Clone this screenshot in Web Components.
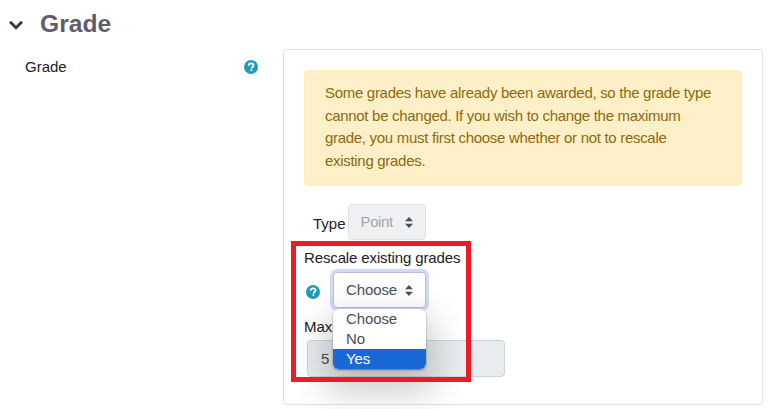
<!DOCTYPE html>
<html>
<head>
<meta charset="utf-8">
<title>Grade</title>
<style>
html, body { margin: 0; height: 409px; overflow: hidden; background: #fff; }
body { font: 15px/20px "Liberation Sans", Arial, sans-serif; color: #1d2125; }
</style>
</head>
<body>
<grade-page></grade-page>

<script>
class HelpIcon extends HTMLElement {
  constructor () {
    super()
    this.attachShadow({ mode: 'open' }).innerHTML = `
<style>
:host { display: block; width: 14px; height: 14px; }
svg { display: block; }
</style>
<svg width="14" height="14" viewBox="0 0 14 14">
  <circle cx="7" cy="7" r="7" fill="#1f9bb8"/>
  <path d="M4.6 5.6C4.7 4.2 5.7 3.3 7.1 3.3c1.4 0 2.4.9 2.4 2 0 1-.6 1.5-1.2 1.9-.5.3-.7.5-.7 1v.2" fill="none" stroke="#fff" stroke-width="1.7"/>
  <rect x="6.5" y="9.3" width="1.8" height="1.8" fill="#fff"/>
</svg>`
  }
}
customElements.define('help-icon', HelpIcon)

class SectionHeader extends HTMLElement {
  constructor () {
    super()
    this.attachShadow({ mode: 'open' }).innerHTML = `
<style>
:host { display: flex; align-items: center; height: 49px; padding: 0 0 1px 9px; box-sizing: border-box; }
svg { display: block; margin-right: 17px; margin-top: 1px; }
h3 { margin: 0; font: bold 24.6px/28px "Liberation Sans", Arial, sans-serif; color: #5e5d6c; }
</style>
<svg width="14" height="10" viewBox="0 0 14 10">
  <path d="M1 1.8 7 7.8 13 1.8" fill="none" stroke="#343a40" stroke-width="2.9"/>
</svg>
<h3><slot></slot></h3>`
  }
}
customElements.define('section-header', SectionHeader)

class AlertBox extends HTMLElement {
  constructor () {
    super()
    this.attachShadow({ mode: 'open' }).innerHTML = `
<style>
:host {
  display: block; box-sizing: border-box; height: 116px; padding: 11px 26px 11px 20px;
  background: #fdf0c8; border: 1px solid #fdeeba; border-radius: 4px;
  color: #8f6a0c; line-height: 22.5px; letter-spacing: -0.3px;
}
</style>
<slot></slot>`
  }
}
customElements.define('alert-box', AlertBox)

class SelectBox extends HTMLElement {
  static get observedAttributes () { return ['value'] }

  constructor () {
    super()
    this.attachShadow({ mode: 'open' }).innerHTML = `
<style>
:host {
  display: flex; align-items: center; justify-content: space-between; box-sizing: border-box;
  height: 36px; padding: 0 12px 0 12px; background: #fff; color: #495057;
  border: 1px solid #ced4da; border-radius: 4px; letter-spacing: -0.1px;
}
:host([disabled]) { background: #eff0f2; border-color: #dee2e6; color: #a3a7ab; letter-spacing: -0.4px; }
:host([focused]) { border-color: #b4bde4; box-shadow: 0 0 0 3px #d3daf6; }
svg { display: block; margin-left: 8px; }
</style>
<span id="value"></span>
<svg width="8" height="11" viewBox="0 0 8 11"><path d="M4 0 8 4.3H0ZM0 6.7H8L4 11Z" fill="#495057"/></svg>`
  }

  attributeChangedCallback () {
    this.shadowRoot.querySelector('#value').textContent = this.getAttribute('value')
  }
}
customElements.define('select-box', SelectBox)

class SelectMenu extends HTMLElement {
  constructor () {
    super()
    this.attachShadow({ mode: 'open' }).innerHTML = `
<style>
:host {
  position: absolute; left: 29px; top: 61px; width: 93px; overflow: hidden;
  background: #fff; border-radius: 6px; color: #495057; z-index: 2; letter-spacing: -0.1px;
  box-shadow: 0 1px 2px rgba(0,0,0,.45), 0 16px 34px 8px rgba(0,0,0,.2);
}
div { height: 20px; padding-left: 13px; line-height: 20px; }
.selected { background: #1a68d6; color: #fff; }
</style>
<div>Choose</div>
<div>No</div>
<div class="selected">Yes</div>`
  }
}
customElements.define('select-menu', SelectMenu)

class GradePage extends HTMLElement {
  constructor () {
    super()
    this.attachShadow({ mode: 'open' }).innerHTML = `
<style>
:host { display: block; }
#row { display: grid; grid-template-columns: 283px 480px; }
#label { display: flex; justify-content: space-between; align-items: flex-start; padding: 8px 25px 0 25px; }
#label help-icon { margin-top: 3px; }
#panel {
  box-sizing: border-box; height: 356px; padding: 20px 20px 0 20px;
  border: 1px solid #dee2e6; border-radius: 4px;
}
#type { display: flex; align-items: flex-end; gap: 2px; margin-top: 18px; padding-left: 9px; }
#type span { line-height: 22px; margin-bottom: 5px; }
#type select-box { width: 78px; }
#rescale { position: relative; margin-top: 8px; height: 137px; }
#rescale-label { line-height: 20px; letter-spacing: -0.13px; }
#choose { display: flex; align-items: center; gap: 13px; margin-top: 4px; padding-left: 2px; }
#choose select-box { width: 93px; }
#choose help-icon { margin-top: 3px; }
#max-label { margin-top: 9px; line-height: 20px; }
#max {
  box-sizing: border-box; width: 198px; height: 37px; margin: 3px 0 0 3px; padding-left: 13px;
  background: #e9ecef; border: 1px solid #ced4da; border-radius: 4px; color: #495057; line-height: 35px;
}
#frame {
  position: absolute; left: -13px; top: -7px; width: 180px; height: 141px; box-sizing: border-box;
  border: 5px solid #ed1c24; z-index: 3;
}
</style>
<section-header>Grade</section-header>
<div id="row">
  <div id="label"><span>Grade</span><help-icon></help-icon></div>
  <div id="panel">
    <alert-box>Some grades have already been awarded, so the grade type cannot be changed. If you wish to change the maximum grade, you must first choose whether or not to rescale existing grades.</alert-box>
    <div id="type"><span>Type</span><select-box value="Point" disabled></select-box></div>
    <div id="rescale">
      <div id="rescale-label">Rescale existing grades</div>
      <div id="choose"><help-icon></help-icon><select-box value="Choose" focused></select-box></div>
      <div id="max-label">Maximum grade</div>
      <div id="max">5</div>
      <select-menu></select-menu>
      <div id="frame"></div>
    </div>
  </div>
</div>`
  }
}
customElements.define('grade-page', GradePage)
</script>
</body>
</html>
